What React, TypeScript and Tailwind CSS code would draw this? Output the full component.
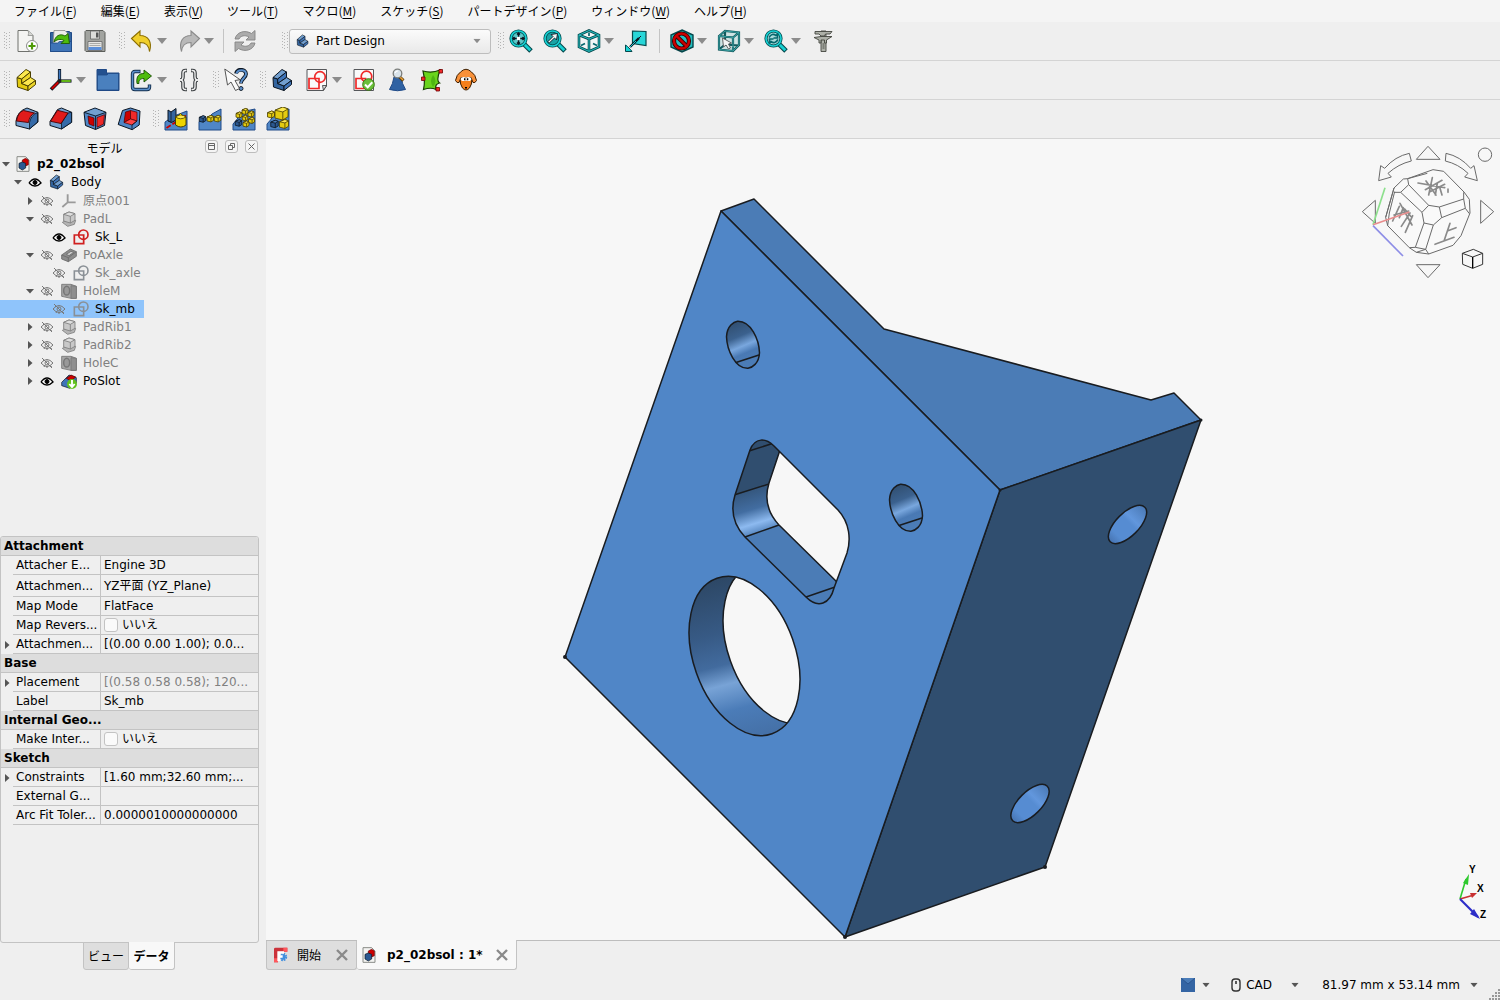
import React from 'react'

type IconProps = { className?: string }

const BLUE = '#3f74b8'
const BLUE_LIGHT = '#729fcf'
const BLUE_DARK = '#204a87'
const INK = '#0b1521'
const RED = '#ef2929'
const RED_DARK = '#cc0000'
const YELLOW = '#edd400'
const CYAN = '#16d0d2'
const CYAN_DARK = '#06686e'

// stair-shaped solid shared by the body and part icons
const Step = ({ top, left, right, line }: { top: string; left: string; right: string; line: string }) => (
  <g stroke={line} strokeLinejoin="round">
    <path d="M2 9.500L6.700 11V15.500L13 18V22.500L2.500 19z" fill={left} />
    <path d="M2 9.500L11 1.500L15.500 4L6.700 11z" fill={top} />
    <path d="M6.700 11L15.500 4V9.500L6.700 15.500z" fill={right} />
    <path d="M6.700 15.500L15.500 9.500L20.500 12.500L13 18z" fill={top} />
    <path d="M13 18L20.500 12.500V16.500L13 22.500z" fill={right} />
  </g>
)

const Cube = ({ x, y, s, blue }: { x: number; y: number; s: number; blue?: boolean }) => (
  <g transform={`translate(${x} ${y}) scale(${s / 10})`} strokeWidth={8 / s} stroke={blue ? INK : '#4a3f00'} strokeLinejoin="round">
    <path d="M-5-2.500L1-5L5-3.500V2.500L1 5L-5 3.500z" fill={blue ? '#2b5891' : '#e3cb10'} />
    <path d="M-5-2.500L1-5L5-3.500L1-1.200z" fill={blue ? '#4a7fc0' : '#fce94f'} />
    <path d="M1-1.200V5" />
  </g>
)

const icons: Record<string, React.ReactNode> = {
  new: (
    <>
      <path d="M3 1.500h10l5 5v16H3z" fill="#f4f4f2" stroke="#6f716d" />
      <path d="M13 1.500q1.500 3 0 5h5" fill="#d8d8d5" stroke="#8c8e8a" strokeWidth=".8" />
      <circle cx="17" cy="17" r="5.500" fill="#fff" stroke="#8a8c88" />
      <path d="M17 13.500v7M13.500 17h7" stroke="#4e9a06" strokeWidth="2.200" />
    </>
  ),
  open: (
    <>
      <path d="M1.500 3.500h5v-1h14v1h2v19h-21z" fill="#34659f" stroke={BLUE_DARK} />
      <path d="M5 1.500h11l3 3v11H4z" fill="#ececea" stroke="#888" strokeWidth=".8" />
      <path d="M1.500 14h7l2-1.500h12v10h-21z" fill={BLUE} stroke={BLUE_DARK} strokeWidth=".8" />
      <path d="M5 13c1-6 6-9 11-6l3-2.500 1.500 10h-8.500l3-3c-4-2-7-1-10 1.500z" fill="#4ebb0c" stroke="#1c5a02" strokeWidth=".9" />
    </>
  ),
  save: (
    <>
      <path d="M3 1.500h17l2 2v19H3l-1-1v-19z" fill="#a2a4a0" stroke="#5c5e5a" />
      <path d="M7.500 2h9v8h-9z" fill="#dcdcda" stroke="#666" strokeWidth=".8" />
      <path d="M13 3.500h2.500v5H13z" fill="#555" />
      <path d="M5 12.500h14v9H5z" fill="#e6e6e4" stroke="#666" strokeWidth=".8" />
      <path d="M6.500 14.500h11M6.500 16.500h11" stroke="#9a9c98" strokeWidth=".8" />
      <path d="M5.500 18h13v3h-13z" fill="#5b8fd9" />
    </>
  ),
  undo: (
    <path d="M1.500 9.500L10 2v4.500c8 0 12.500 6 9.500 16-.5-6-3.500-9-9.500-9V18z" fill="#f0cf2c" stroke="#8a6d00" strokeWidth="1.100" />
  ),
  redo: (
    <path d="M22.500 9.500L14 2v4.500c-8 0-12.500 6-9.500 16 .5-6 3.500-9 9.500-9V18z" fill="#b9b9b9" stroke="#8a8a8a" strokeWidth="1.100" />
  ),
  refresh: (
    <g fill="#ababab" stroke="#858585" strokeWidth=".9">
      <path d="M2 10C3.500 3 12 .5 18.500 4.500L22 1.500V11h-9l3-3C11.500 5.500 7.500 7 6 10z" />
      <path d="M22 14C20.500 21 12 23.500 5.500 19.500L2 22.500V13h9l-3 3c4.500 2.500 8.500 1 10-2z" />
    </g>
  ),
  body: <Step top={BLUE_LIGHT} left="#34659f" right={BLUE} line={INK} />,
  part: <Step top="#fce94f" left="#e3cb10" right="#edd62a" line="#4a3f00" />,
  axes: (
    <>
      <path d="M10.500 13V1" stroke={INK} strokeWidth="3.200" />
      <path d="M10.500 12V2" stroke="#3f78c0" strokeWidth="1.600" />
      <path d="M10.500 13h12" stroke={INK} strokeWidth="3.200" />
      <path d="M12 13h9.700" stroke="#73d216" strokeWidth="1.700" />
      <path d="M10.500 13L2 21.500" stroke={INK} strokeWidth="3.600" />
      <path d="M9.500 14L2.800 20.800" stroke={RED_DARK} strokeWidth="2.200" />
      <circle cx="10.500" cy="13" r="2" fill="#222" />
    </>
  ),
  folder: (
    <>
      <path d="M1 1.500h9.500v3.500H23v17.500H1z" fill="#23518f" stroke={BLUE_DARK} />
      <path d="M1.500 7h9.500l1.500-1.500h10v16.500h-21z" fill="#4a80be" stroke={BLUE_DARK} strokeWidth=".8" />
    </>
  ),
  export: (
    <>
      <path d="M10.500 3.500H5Q2.500 3.500 2.500 6v13Q2.500 21.500 5 21.500h12q2.500 0 2.500-2.500v-2.500" fill="none" stroke="#14304f" strokeWidth="3.400" />
      <path d="M9.700 3.500H5Q2.500 3.500 2.500 6v13Q2.500 21.500 5 21.500h12q2.500 0 2.500-2.500v-1.700" fill="none" stroke="#5b8fcb" strokeWidth="1.500" />
      <path d="M7 15.500C6 8 9 5.500 14 5.500V2l7.500 6-7.500 6V10.500c-4 0-5.500 2-5 5z" fill="#4ebb0c" stroke="#174d02" strokeWidth=".9" />
    </>
  ),
  braces: (
    <g fill="none" stroke="#3c4043" strokeWidth="3.600">
      <path d="M10 2.500H8.500Q6 2.500 6 5v4Q6 12 3 12q3 0 3 3v4q0 2.500 2.500 2.500H10" />
      <path d="M14 2.500h1.500Q18 2.500 18 5v4q0 3 3 3-3 0-3 3v4q0 2.500-2.500 2.500H14" />
      <g stroke="#f3f3f3" strokeWidth="1.300">
        <path d="M9.500 2.500h-1Q6 2.500 6 5v4Q6 12 3 12q3 0 3 3v4q0 2.500 2.500 2.500h1" />
        <path d="M14.500 2.500h1Q18 2.500 18 5v4q0 3 3 3-3 0-3 3v4q0 2.500-2.500 2.500h-1" />
      </g>
    </g>
  ),
  whatsthis: (
    <>
      <path d="M12 5.500C13 0 22 1 22 6c0 4-5 4.500-5 9.500" fill="none" stroke={INK} strokeWidth="3.800" />
      <path d="M12.500 5.500C13.500 1 22 1 22 6c0 4-5 4.500-5 9" fill="none" stroke="#5b8fcb" strokeWidth="2" />
      <circle cx="17" cy="20.500" r="2" fill="#5b8fcb" stroke={INK} strokeWidth=".9" />
      <path d="M.8 1l2.700 16 3.500-3 4.500 8.500 4-2-4.500-8 5-.8z" fill="#fafafa" stroke="#555" />
    </>
  ),
  sketch: (
    <>
      <path d="M2 1.500h19.500v16.500l-3.500 4.500H2z" fill="#fafafa" stroke="#55575a" />
      <path d="M21.500 17.500l-3 5-1-5z" fill="#ddd" stroke="#333" strokeWidth=".8" />
      <circle cx="15" cy="9" r="5.300" fill="none" stroke={RED} strokeWidth="1.700" />
      <path d="M4 10.500h10v10H4z" fill="none" stroke={RED} strokeWidth="1.700" />
    </>
  ),
  validate: (
    <>
      <path d="M2 1.500h19.500v21H2z" fill="#fafafa" stroke="#55575a" />
      <circle cx="14.500" cy="8.500" r="5.300" fill="none" stroke={RED} strokeWidth="1.700" />
      <path d="M4 10.500h9.500v10H4z" fill="none" stroke={RED} strokeWidth="1.700" />
      <circle cx="16.500" cy="16.500" r="5.800" fill="#6abf3a" stroke="#3b7a12" />
      <path d="M13 16.500l2.700 2.700 4.600-5" fill="none" stroke="#fff" strokeWidth="2" />
    </>
  ),
  check: (
    <>
      <path d="M8 9h7q1 7 4.500 12.500-8 2.500-16 0Q7 16 8 9z" fill="#2f62a3" stroke={BLUE_DARK} />
      <path d="M13.500 9l4 3.500" stroke="#5f3d06" strokeWidth="3" />
      <path d="M14 9l3 3" stroke="#e9a13b" strokeWidth="1.600" />
      <circle cx="11.500" cy="5.500" r="4.300" fill="#d9e3ea" stroke="#7a7d7a" strokeWidth="1.300" />
      <path d="M9 5q1-2.200 3-2" stroke="#fff" fill="none" strokeWidth="1.200" />
    </>
  ),
  binder: (
    <>
      <path d="M3 3q9 2.500 17-1-4 11-.5 13-5 1-3.500 6.500-5-2.500-12.500 0 2-8-.5-18.500z" fill="#6ad41c" stroke="#173f02" strokeWidth="1.200" />
      <path d="M13 7q5 6 0 12-4-6 0-12z" fill="#4fb512" />
      <g fill={RED} stroke="#6d0000" strokeWidth=".8">
        <path d="M19 1.500h3.500V5H19zM1.500 9H5v3.500H1.500zM16 19.500h3.500V23H16z" />
      </g>
    </>
  ),
  clone: (
    <>
      <path d="M6 10q0 7 2.500 10 3.500 4 7 0Q18 17 18 10z" fill="#f57f1b" stroke="#3d1e00" />
      <path d="M6.500 4Q12-1.500 17.500 4q4 2.500 5 8.500-1.500 3-3.500 2l-2-5H7l-2 5q-2 1-3.500-2 1-6 5-8.500z" fill="#f9913a" stroke="#3d1e00" />
      <ellipse cx="9.700" cy="11" rx="3" ry="2" fill="#fff" />
      <ellipse cx="14.300" cy="11" rx="3" ry="2" fill="#fff" />
      <path d="M10 10.300h1.500v2H10zM12.800 10.300h1.500v2h-1.500zM11 19h2v1.500h-2z" fill="#000" />
    </>
  ),
  fillet: (
    <>
      <path d="M1 14Q2.500 4 12 1l11 4.300V15l-8.500 7L1 18.500z" fill={BLUE_LIGHT} stroke={INK} strokeLinejoin="round" />
      <path d="M14.500 22V15.500Q16 8 22.500 5.500V15z" fill="#356aa8" stroke={INK} strokeWidth=".8" />
      <path d="M1.500 14Q3 5 8.500 3.500L19.500 6Q14.500 8.500 13.500 15.500z" fill="#e01b1b" stroke="#4d0000" strokeWidth=".9" />
    </>
  ),
  chamfer: (
    <>
      <path d="M1 14.500L8.500 2.500L12.500 1l10.200 4.300v10L12.500 22L1 18.500z" fill={BLUE_LIGHT} stroke={INK} strokeLinejoin="round" />
      <path d="M12.500 22v-6L19 6l3.500-.7v10z" fill="#356aa8" stroke={INK} strokeWidth=".8" />
      <path d="M1.500 14.300L8.500 3.300L19 6l-7 10.500z" fill="#e01b1b" stroke="#4d0000" strokeWidth=".9" />
    </>
  ),
  draft: (
    <>
      <path d="M1 5.300L12 1l11 4.300L21.500 18.500l-9 4-10-4z" fill="#4f86c6" stroke={INK} strokeLinejoin="round" />
      <path d="M2 5.500L12 1.800L22 5.500l-9.500 3z" fill={BLUE_LIGHT} />
      <path d="M1 5.300l11.500 3.700L23 5.300M12.500 9v13.500" stroke={INK} strokeWidth=".9" />
      <path d="M5 9l6 2v8l-5-2z" fill={RED_DARK} stroke="#4d0000" strokeWidth=".7" />
      <path d="M14 10.500l7.500-2.800-1 9.500-6.500 3z" fill={RED} stroke="#4d0000" strokeWidth=".7" />
    </>
  ),
  thickness: (
    <>
      <path d="M5.500 3.500l8-2.500L23 4l-.8 14-7 4.700L1.200 17.500z" fill="#4f86c6" stroke={INK} strokeLinejoin="round" />
      <path d="M8.500 5l5-1.500V12l-6.500 3.500z" fill={RED_DARK} stroke="#4d0000" strokeWidth=".7" />
      <path d="M13.500 3.500L20 5.200V14l-6.500-2z" fill={RED} stroke="#4d0000" strokeWidth=".7" />
      <path d="M7 15.500l6.500-3.500 6.500 2-5 4z" fill="#f44" stroke="#4d0000" strokeWidth=".7" />
      <path d="M15 18v4.500M15 18l5-4" stroke={INK} strokeWidth=".8" />
    </>
  ),
  mirrored: (
    <>
      <path d="M1 15L10 9L23 4V23H1z" fill="#4f86c6" stroke={BLUE_DARK} />
      <path d="M2.500 21L22 8.500" stroke={RED_DARK} strokeWidth="1.800" strokeDasharray="5 2" />
      <path d="M4 3l3 2 5-3.500V13L7.500 15.500 4 14z" fill="#34659f" stroke={INK} />
      <path d="M7 5v10.500" stroke={INK} strokeWidth=".8" />
      <path d="M11.500 10q5-4 10.500 0v8q-5 4-10.500 0z" fill={YELLOW} stroke="#4a3f00" />
      <path d="M11.500 10q5 3.500 10.500 0-5-4-10.500 0" fill="#fce94f" stroke="#4a3f00" strokeWidth=".8" />
      <path d="M14.500 8.500l2-2 2 2" fill={YELLOW} stroke="#4a3f00" strokeWidth=".8" />
    </>
  ),
  linear: (
    <>
      <path d="M1 14.500Q9 13 14 7L23 2V23H1z" fill="#4f86c6" stroke={BLUE_DARK} />
      <Cube x={4.5} y={12} s={6.500} blue />
      <Cube x={12.300} y={11.700} s={6.500} />
      <Cube x={19.500} y={11.700} s={6.500} />
    </>
  ),
  polar: (
    <>
      <path d="M1 17Q4 14 8 8L16 3.500L23 2V23H1z" fill="#4f86c6" stroke={BLUE_DARK} />
      <Cube x={13} y={4.500} s={6} />
      <Cube x={7} y={8} s={6} />
      <Cube x={19} y={7} s={6} />
      <Cube x={13} y={11} s={5.500} />
      <Cube x={19.500} y={13.500} s={6} />
      <Cube x={14} y={17} s={6} />
      <Cube x={6.500} y={16} s={6.500} blue />
    </>
  ),
  multi: (
    <>
      <path d="M1 17Q4 14 8 8L16 3.500L23 2V23H1z" fill="#4f86c6" stroke={BLUE_DARK} />
      <Cube x={5} y={7.500} s={7} />
      <Cube x={15.500} y={6.500} s={13} />
      <Cube x={18} y={17} s={9} />
      <Cube x={8.500} y={17} s={7.500} blue />
    </>
  ),
  zoomFit: (
    <>
      <path d="M14.500 14.500l7.500 7.500" stroke="#04484c" strokeWidth="5" />
      <path d="M15 15l6.300 6.300" stroke={CYAN} strokeWidth="2.800" />
      <circle cx="9.500" cy="9.500" r="7.500" fill="#5cc9ca" stroke="#04484c" strokeWidth="3.200" />
      <circle cx="9.500" cy="9.500" r="7.500" fill="none" stroke={CYAN} strokeWidth="1.700" />
      <path d="M9.500 4v11M4 9.500h11M8 5.500l1.500-1.500L11 5.500M8 13.500l1.500 1.500 1.500-1.500M5.500 8L4 9.500 5.500 11M13.500 8L15 9.500 13.500 11" stroke={INK} fill="none" strokeWidth="1.500" />
      <path d="M7.800 7.800h3.400v3.400H7.800z" fill="#fff" />
    </>
  ),
  zoomSel: (
    <>
      <path d="M14.500 14.500l7.500 7.500" stroke="#04484c" strokeWidth="5" />
      <path d="M15 15l6.300 6.300" stroke={CYAN} strokeWidth="2.800" />
      <circle cx="9.500" cy="9.500" r="7.500" fill="#1aa3a5" stroke="#04484c" strokeWidth="3.200" />
      <circle cx="9.500" cy="9.500" r="7.500" fill="none" stroke={CYAN} strokeWidth="1.700" />
      <path d="M14.500 4.500l-1 6.500-2-2L6.300 14l-1.300-1.500 5-5L8 5.500z" fill="#f4f4f4" stroke={INK} strokeWidth=".9" />
    </>
  ),
  zoomSync: (
    <>
      <path d="M14.500 14.500l7.500 7.500" stroke="#04484c" strokeWidth="5" />
      <path d="M15 15l6.300 6.300" stroke={CYAN} strokeWidth="2.800" />
      <circle cx="9.500" cy="9.500" r="7.500" fill="#a9dcdc" stroke="#04484c" strokeWidth="3.200" />
      <circle cx="9.500" cy="9.500" r="7.500" fill="none" stroke={CYAN} strokeWidth="1.700" />
      <path d="M5 8.500q3-5 7-2l1.500-1.500v4H9.500M14 10.500q-3 5-7 2l-1.500 1.500v-4h4" fill="none" stroke={CYAN_DARK} strokeWidth="1.700" />
    </>
  ),
  iso: (
    <>
      <path d="M12 1.500l10 4.500v12l-10 4.500L2 18V6z" fill="#f2f6f6" />
      <path d="M12 1.500l10 4.500v12l-10 4.500L2 18V6zM2 6l10 4 10-4M12 10v12" fill="none" stroke="#04484c" strokeWidth="2.600" />
      <path d="M12 1.500l10 4.500v12l-10 4.500L2 18V6zM2 6l10 4 10-4M12 10v12" fill="none" stroke="#24b9bb" strokeWidth="1.100" />
      <path d="M4 16.500l4-2M20 16.500l-4-2M12 3.500V7" stroke={CYAN_DARK} strokeWidth="1.700" />
    </>
  ),
  align: (
    <>
      <path d="M8.500 2l13.500.5v14l-13.500-2z" fill="#27d6d8" stroke="#04484c" strokeWidth="1.200" />
      <path d="M15 9l-9 9" stroke={INK} strokeWidth="2.400" />
      <path d="M12 12l-6 6" stroke={CYAN} strokeWidth="1" />
      <path d="M1.500 22.500V16l2 1.500 3 3L8 22.500z" fill={CYAN} stroke="#04484c" />
      <path d="M14 10l3-3" stroke={INK} />
    </>
  ),
  drawStyle: (
    <>
      <path d="M12 1l11 5v12l-11 5L1 18V6z" fill="#22bfc1" stroke="#04484c" strokeWidth="1.400" />
      <circle cx="11.500" cy="12" r="7.500" fill="none" stroke="#3a0000" strokeWidth="4.200" />
      <path d="M6.500 7l10 10" stroke="#3a0000" strokeWidth="4.200" />
      <circle cx="11.500" cy="12" r="7.500" fill="none" stroke={RED_DARK} strokeWidth="2.400" />
      <path d="M6.500 7l10 10" stroke={RED_DARK} strokeWidth="2.400" />
    </>
  ),
  boxSel: (
    <>
      <path d="M2 7l6-5 14 1.500V16l-6 6L2 20.500z" fill="#cfe3e3" />
      <path d="M2 7l6-5 14 1.500V16l-6 6L2 20.500zM2 7l14 1.500v13M16 8.500l6-5M8 2v13.500l14 1M8 15.500l-6 5" fill="none" stroke="#135a5e" strokeWidth="2.200" />
      <path d="M2 7l6-5 14 1.500V16l-6 6L2 20.500zM2 7l14 1.500v13M16 8.500l6-5" fill="none" stroke="#3fa9ab" strokeWidth=".9" />
      <path d="M5.500 9l1 9 2.500-2 2.500 4 2-1-2-4 3-1z" fill="#f4f4f4" stroke="#555" strokeWidth=".9" />
    </>
  ),
  caliper: (
    <g fill="#aeb1a9" stroke="#44463f" strokeWidth=".9">
      <path d="M10 2h5v20.500h-5z" />
      <path d="M4 2.500h17l-2 2.500h-4.500l-1 2H10L8 5H4z" />
      <path d="M3 8.500l7-1h11l-5.500 3.500V14h-2v-3H10v3H8v-3z" />
      <path d="M11.500 15h2M11.500 17h2M11.500 19h2" />
    </g>
  ),
  doc: (
    <>
      <path d="M3 1h13l5 5v17H3z" fill="#f4f4f2" stroke="#8a8c88" strokeWidth="1.500" />
      <path d="M11 6l5-2.500L20 6v7l-4 2-5-2z" fill={RED_DARK} stroke="#6d0000" />
      <path d="M6 11l5-2 5 2v7l-5 3-5-3z" fill="#2b5891" stroke={INK} />
    </>
  ),
  origin: <path d="M10 14V2M10 14h12M10 14l-8 7" stroke="#9a9a9a" strokeWidth="2.800" fill="none" />,
  pad: (
    <g stroke="#808080" strokeWidth="1.300">
      <path d="M2 17l6-3h14l-2 6-10 3z" fill="#b5b5b5" />
      <path d="M4 5l8-3.500L21 4v10l-7 4-10-3z" fill="#c8c8c8" />
      <path d="M4 5l8-3.500L21 4l-7 4z" fill="#dedede" />
      <path d="M14 8v10" fill="none" />
    </g>
  ),
  pocket: (
    <g stroke="#6c6c6c" strokeWidth="1.300">
      <path d="M1 12L14 3l9 4v7L11 22l-10-4z" fill="#8c8c8c" />
      <path d="M1 12l10 4 12-9M11 16v6" fill="none" />
      <path d="M8 11l7-4.500 4 1.500-7 5z" fill="#d0d0d0" />
    </g>
  ),
  hole: (
    <g stroke="#777" strokeWidth="1.300">
      <path d="M1 2h14l8 3v18h-8L1 20z" fill="#a6a6a6" />
      <path d="M15 4l8 1v18h-8z" fill="#8f8f8f" />
      <ellipse cx="8.500" cy="11.500" rx="4.500" ry="6.500" fill="#999" strokeWidth="2.200" />
    </g>
  ),
  slot: (
    <>
      <path d="M1 14L12 3l11 4v8l-10 8-12-4z" fill={BLUE} stroke={INK} />
      <path d="M8 8l7-5 7 3-7 6z" fill={RED_DARK} stroke="#4d0000" />
      <circle cx="16.500" cy="16.500" r="7.500" fill="#62c11d" />
      <path d="M16.500 10.500v9M12.500 16.500l4 4.500 4-4.500" stroke="#fff" strokeWidth="2.800" fill="none" />
    </>
  ),
  treeSketch: (
    <g fill="none" stroke="#d02020" strokeWidth="2.600">
      <circle cx="15.500" cy="8.500" r="7" />
      <path d="M2 9h14v13H2z" />
    </g>
  ),
  treeSketchOff: (
    <g fill="none" stroke="currentColor" strokeWidth="2.400">
      <circle cx="15.500" cy="8.500" r="7" />
      <path d="M2 9h14v13H2z" />
    </g>
  ),
  freecad: (
    <>
      <path d="M3 3q0-2 2-2h18v6H9v16H3z" fill="#cb333b" />
      <path d="M17 1h6v6h-6zM3 17h6v6H3z" fill="#ff585d" />
      <circle cx="16.500" cy="15" r="4" fill="#418fde" />
      <circle cx="16.500" cy="15" r="4.800" fill="none" stroke="#418fde" strokeWidth="3" strokeDasharray="2.500 1.270" />
      <path d="M8 6.500h10V10h-5.500v2.500H16V16h-3.500v5H8z" fill="#fff" />
    </>
  ),
}

const Icon = ({ name, className = 'size-6' }: IconProps & { name: string }) => (
  <svg viewBox="0 0 24 24" className={`shrink-0 ${className}`} fill="none" aria-hidden="true">
    {icons[name]}
  </svg>
)

const Eye = ({ off }: { off?: boolean }) =>
  off ? (
    <svg viewBox="0 0 14 12" className="h-3 w-3.5 shrink-0" fill="none" stroke="#777" aria-hidden="true">
      <path d="M1 6q6-7 12 0-6 7-12 0M2 1l10 10M4 10l1-2M7 11V9M10 9l2 1M3 3l1 1" />
      <circle cx="7" cy="6" r="2" />
    </svg>
  ) : (
    <svg viewBox="0 0 14 12" className="h-3 w-3.5 shrink-0" fill="#fff" stroke="#000" aria-hidden="true">
      <path d="M1 7q6-8 12 0-6 6-12 0" strokeWidth="1.300" />
      <circle cx="7" cy="6.500" r="2" fill="#000" />
    </svg>
  )

const Down = ({ className = 'text-[#8c8c8c]' }: IconProps) => (
  <svg viewBox="0 0 10 6" className={`h-1.5 w-2.5 shrink-0 ${className}`} fill="currentColor" aria-hidden="true">
    <path d="M0 0h10L5 6z" />
  </svg>
)

const TreeArrow = ({ open }: { open?: boolean }) => (
  <svg viewBox="0 0 12 12" className="size-3 shrink-0" fill="#555" aria-hidden="true">
    {open ? <path d="M2 4h8L6 8.500z" /> : <path d="M4 2v8l4.500-4z" />}
  </svg>
)

const Grip = () => (
  <svg viewBox="0 0 6 18" className="ml-[7px] h-[18px] w-1.5 shrink-0" fill="#b4b4b4" aria-hidden="true">
    {[0, 3, 6, 9, 12, 15].map((y) => (
      <path key={y} d={`M0 ${y}h1v1H0zM5 ${y}h1v1H5zM2 ${y + 1}h1v1H2z`} />
    ))}
  </svg>
)

const Tool = ({ icon, label, menu }: { icon: string; label: string; menu?: boolean }) => (
  <button type="button" aria-label={label} className={`flex h-8 shrink-0 items-center gap-[3px] pl-[5px] ${menu ? 'w-[47px]' : 'w-[34px]'}`}>
    <Icon name={icon} />
    {menu && <Down />}
  </button>
)

const Separator = ({ className }: IconProps) => <div className={`h-6 w-px shrink-0 bg-[#c4c4c4] ${className}`} />

const menus = [
  ['ファイル', 'F'],
  ['編集', 'E'],
  ['表示', 'V'],
  ['ツール', 'T'],
  ['マクロ', 'M'],
  ['スケッチ', 'S'],
  ['パートデザイン', 'P'],
  ['ウィンドウ', 'W'],
  ['ヘルプ', 'H'],
]

const MenuBar = () => (
  <nav className="flex h-[22px] shrink-0 items-center bg-[#f4f4f4] pl-0.5 font-['Noto_Sans_CJK_JP',sans-serif]">
    {menus.map(([label, key]) => (
      <button key={key} type="button" className="px-3 whitespace-nowrap">
        {label}(<span className="underline underline-offset-2">{key}</span>)
      </button>
    ))}
  </nav>
)

const toolbarRow = 'flex h-[39px] shrink-0 items-center border-b border-[#d4d4d4]'

const Toolbars = () => (
  <>
    <div className={toolbarRow}>
      <div className="-ml-[3px] flex items-center">
        <Grip />
        <Tool icon="new" label="新規" />
        <Tool icon="open" label="開く" />
        <Tool icon="save" label="保存" />
      </div>
      <div className="flex items-center">
        <Grip />
        <Tool icon="undo" label="元に戻す" menu />
        <Tool icon="redo" label="やり直し" menu />
        <Separator className="mx-1" />
        <Tool icon="refresh" label="更新" />
      </div>
      <div className="ml-[13px] flex items-center gap-px">
        <Grip />
        <label className="flex h-[25px] w-[202px] items-center gap-1.5 rounded-[3px] border border-[#bdbdbd] bg-linear-to-b from-[#fbfbfb] to-[#e9e9e9] pr-2 pl-1.5">
          <Icon name="body" className="size-3.5" />
          <select aria-label="ワークベンチ" className="h-full min-w-0 flex-1 appearance-none bg-transparent pb-px outline-none">
            <option>Part Design</option>
          </select>
          <Down className="scale-75 text-[#8c8c8c]" />
        </label>
      </div>
      <div className="flex items-center">
        <Grip />
        <Tool icon="zoomFit" label="全てにフィット" />
        <Tool icon="zoomSel" label="選択にフィット" />
        <Tool icon="iso" label="アイソメトリック" menu />
        <Tool icon="align" label="選択に揃える" />
        <Separator className="mr-[5px] ml-1.5" />
        <Tool icon="drawStyle" label="描画スタイル" menu />
        <Tool icon="boxSel" label="選択フィルター" menu />
        <Tool icon="zoomSync" label="同期ビュー" menu />
        <Tool icon="caliper" label="計測" />
      </div>
    </div>
    <div className={toolbarRow}>
      <div className="-ml-[3px] flex items-center">
        <Grip />
        <Tool icon="part" label="パーツを作成" />
        <Tool icon="axes" label="座標系" menu />
        <Tool icon="folder" label="グループ" />
        <Tool icon="export" label="リンクを作成" menu />
        <Tool icon="braces" label="変数セット" />
      </div>
      <div className="flex items-center">
        <Grip />
        <Tool icon="whatsthis" label="これは何?" />
      </div>
      <div className="flex items-center">
        <Grip />
        <Tool icon="body" label="ボディーを作成" />
        <Tool icon="sketch" label="スケッチを作成" menu />
        <Tool icon="validate" label="スケッチを検証" />
        <Tool icon="check" label="ジオメトリーをチェック" />
        <Tool icon="binder" label="シェイプバインダー" />
        <Tool icon="clone" label="クローン" />
      </div>
    </div>
    <div className={toolbarRow}>
      <div className="-ml-[3px] flex items-center">
        <Grip />
        <Tool icon="fillet" label="フィレット" />
        <Tool icon="chamfer" label="面取り" />
        <Tool icon="draft" label="抜き勾配" />
        <Tool icon="thickness" label="厚み" />
      </div>
      <div className="flex items-center">
        <Grip />
        <Tool icon="mirrored" label="鏡像" />
        <Tool icon="linear" label="直線状パターン" />
        <Tool icon="polar" label="円状パターン" />
        <Tool icon="multi" label="マルチ変換" />
      </div>
    </div>
  </>
)

interface TreeNode {
  label: string
  icon: string
  depth: number
  open?: boolean
  leaf?: boolean
  visible?: boolean
  selected?: boolean
}

const nodes: TreeNode[] = [
  { label: 'Body', icon: 'body', depth: 1, open: true, visible: true },
  { label: '原点001', icon: 'origin', depth: 2 },
  { label: 'PadL', icon: 'pad', depth: 2, open: true },
  { label: 'Sk_L', icon: 'treeSketch', depth: 3, leaf: true, visible: true },
  { label: 'PoAxle', icon: 'pocket', depth: 2, open: true },
  { label: 'Sk_axle', icon: 'treeSketchOff', depth: 3, leaf: true },
  { label: 'HoleM', icon: 'hole', depth: 2, open: true },
  { label: 'Sk_mb', icon: 'treeSketchOff', depth: 3, leaf: true, selected: true },
  { label: 'PadRib1', icon: 'pad', depth: 2 },
  { label: 'PadRib2', icon: 'pad', depth: 2 },
  { label: 'HoleC', icon: 'hole', depth: 2 },
  { label: 'PoSlot', icon: 'slot', depth: 2, visible: true },
]

const indents = ['', 'pl-3', 'pl-6', 'pl-6']

const ModelTree = () => (
  <ul className="min-h-0 flex-1 overflow-hidden">
    <li className="flex h-[19px] items-center">
      <TreeArrow open />
      <Icon name="doc" className="mr-1.5 ml-[3px] size-4" />
      <span className="font-bold">p2_02bsol</span>
    </li>
    {nodes.map((node) => (
      <li
        key={node.label}
        className={`flex w-36 items-center ${indents[node.depth]} ${node.icon === 'origin' ? 'h-[19px]' : 'h-[18px]'} ${node.selected ? 'bg-[#8fc4fb]' : ''}`}
      >
        {node.leaf ? <span className="w-6" /> : <TreeArrow open={node.open} />}
        <span className="ml-1 flex">
          <Eye off={!node.visible} />
        </span>
        <Icon name={node.icon} className="mr-1.5 ml-[7px] size-4 text-[#8a9096]" />
        <span className={`whitespace-nowrap ${node.visible || node.selected ? 'text-black' : 'text-[#808080]'}`}>{node.label}</span>
      </li>
    ))}
  </ul>
)

interface Property {
  name: string
  value?: string
  group?: boolean
  expand?: boolean
  check?: boolean
  muted?: boolean
  tall?: boolean
}

const properties: Property[] = [
  { name: 'Attachment', group: true },
  { name: 'Attacher E...', value: 'Engine 3D' },
  { name: 'Attachmen...', value: 'YZ平面 (YZ_Plane)', tall: true },
  { name: 'Map Mode', value: 'FlatFace' },
  { name: 'Map Revers...', value: 'いいえ', check: true },
  { name: 'Attachmen...', value: '[(0.00 0.00 1.00); 0.0...', expand: true },
  { name: 'Base', group: true },
  { name: 'Placement', value: '[(0.58 0.58 0.58); 120...', expand: true, muted: true },
  { name: 'Label', value: 'Sk_mb' },
  { name: 'Internal Geo...', group: true },
  { name: 'Make Inter...', value: 'いいえ', check: true },
  { name: 'Sketch', group: true },
  { name: 'Constraints', value: '[1.60 mm;32.60 mm;...', expand: true },
  { name: 'External G...', value: '' },
  { name: 'Arc Fit Toler...', value: '0.0000010000000000' },
]

const PropertyTable = () => (
  <div className="mr-px h-[407px] shrink-0 overflow-hidden rounded-[3px] border border-[#c3c3c3]">
    <table className="w-full table-fixed border-separate border-spacing-0">
      <colgroup>
        <col className="w-3" />
        <col className="w-[88px]" />
        <col />
      </colgroup>
      <tbody>
        {properties.map((p, i) =>
          p.group ? (
            <tr key={i} className="h-[19px]">
              <th colSpan={3} className="h-[19px] border-b border-[#c3c3c3] bg-[#dddddd] p-0 pl-[3px] text-left leading-4 font-bold">
                {p.name}
              </th>
            </tr>
          ) : (
            <tr key={i} className="whitespace-nowrap">
              <td className="p-0">{p.expand && <TreeArrow />}</td>
              <td className={`border-r border-b border-[#c3c3c3] p-0 pl-[3px] leading-4 ${p.tall ? 'h-[22px]' : 'h-[19px]'}`}>{p.name}</td>
              <td className={`overflow-hidden border-b border-[#c3c3c3] p-0 pl-[3px] leading-4 ${p.muted ? 'text-[#808080]' : ''}`}>
                {p.check ? (
                  <label className="flex items-center gap-1">
                    <input type="checkbox" className="size-3.5 appearance-none rounded-[3px] border border-[#c3c3c3] bg-[#fafafa]" />
                    {p.value}
                  </label>
                ) : (
                  p.value
                )}
              </td>
            </tr>
          ),
        )}
      </tbody>
    </table>
  </div>
)

const dockButtons = [
  { label: 'オーバーレイ', path: 'M3 3h6v6H3zM3 5h6' },
  { label: 'フロート', path: 'M5 5V3h4v4H7M3 5h4v4H3z' },
  { label: '閉じる', path: 'M3 3l6 6M9 3L3 9' },
]

const Dock = () => (
  <aside className="flex w-[260px] shrink-0 flex-col">
    <header className="flex h-[15px] shrink-0 items-center">
      <h2 className="w-[205px] pt-0.5 pl-1 text-center font-['Noto_Sans_CJK_JP',sans-serif] leading-4">モデル</h2>
      <div className="flex gap-[7px]">
        {dockButtons.map((b) => (
          <button key={b.label} type="button" aria-label={b.label} className="size-[13px] rounded-[3px] border border-[#bdbdbd] bg-[#f5f5f5]">
            <svg viewBox="0.500 0.500 11 11" className="size-[11px]" fill="none" stroke="#666" aria-hidden="true">
              <path d={b.path} />
            </svg>
          </button>
        ))}
      </div>
    </header>
    <ModelTree />
    <PropertyTable />
    <div className="-mt-px mr-0.5 flex h-7 shrink-0 justify-center font-['Noto_Sans_CJK_JP',sans-serif]">
      <button type="button" className="w-[46px] rounded-b-[3px] border border-[#c3c3c3] bg-[#dedede]">
        ビュー
      </button>
      <button type="button" className="w-[46px] rounded-b-[3px] border border-t-0 border-l-0 border-[#c3c3c3] bg-[#f8f8f8] font-bold">
        データ
      </button>
    </div>
  </aside>
)

const SLOT = 'M750 450C755 437 766 438 774 446L838 510C850 523 851 540 847 553L834 588C830 604 818 609 806 597L745 537C732 523 731 508 735 495Z'

const Model = () => (
  <svg viewBox="266 139 1234 801" className="h-full w-full" role="img" aria-label="PoSlot">
    <defs>
      <linearGradient id="bore" x1="0" y1="0" x2=".3" y2="1">
        <stop offset="0" stopColor="#2e4a69" />
        <stop offset=".4" stopColor="#3b618e" />
        <stop offset=".62" stopColor="#79a7de" />
        <stop offset=".78" stopColor="#4979b4" />
        <stop offset="1" stopColor="#4b7cb6" />
      </linearGradient>
      <linearGradient id="ring" gradientUnits="userSpaceOnUse" x1="710" y1="576" x2="752" y2="736">
        <stop offset="0" stopColor="#2c4663" />
        <stop offset=".35" stopColor="#375a85" />
        <stop offset=".54" stopColor="#426b9e" />
        <stop offset=".66" stopColor="#78a3d6" />
        <stop offset=".82" stopColor="#4b7cb8" />
        <stop offset="1" stopColor="#4571a8" />
      </linearGradient>
      <linearGradient id="corner" gradientUnits="userSpaceOnUse" x1="748" y1="488" x2="762" y2="534">
        <stop offset="0" stopColor="#335479" />
        <stop offset=".45" stopColor="#426da1" />
        <stop offset=".75" stopColor="#8dbaf0" />
        <stop offset="1" stopColor="#4b7cb6" />
      </linearGradient>
      <linearGradient id="sideBore" x1="0" y1="0" x2="1" y2="0">
        <stop offset="0" stopColor="#4673b0" />
        <stop offset=".2" stopColor="#568cd2" />
        <stop offset=".55" stopColor="#568cd2" />
        <stop offset=".65" stopColor="#6297dd" />
        <stop offset="1" stopColor="#4a79b5" />
      </linearGradient>
      <clipPath id="slotClip">
        <path d={SLOT} />
      </clipPath>
      <clipPath id="ringClip">
        <ellipse rx="82.500" ry="51" transform="translate(744.500 656) rotate(70.500)" />
      </clipPath>
    </defs>
    <g stroke="#191c20" strokeWidth="1.500" strokeLinejoin="round">
      <path d="M721 211L754 199L884 329L1151 400L1174 393L1201 420L1000 490Z" fill="#4b7cb6" />
      <path d="M1000 490L1201 420L1045 867L845 937Z" fill="#304e6f" />
      <path d="M721 211L1000 490L845 937L565 657Z" fill="#5086c7" />

      {/* mounting holes through the plate */}
      {[0, 163].map((d) => (
        <g key={d} transform={`translate(${d} ${d})`}>
          <g transform="translate(743 344.700)">
            <path d="M-5.500-23.500C8-24 16 -5 16.500 8C16 19 9 23 5 23.500C-8 24-16 5-16.500-8C-16-19-9-23-5.500-23.500Z" fill="url(#bore)" />
          </g>
          <path d="M736 362.500L759 355" />
        </g>
      ))}

      {/* rounded slot */}
      <g clipPath="url(#slotClip)">
        <path d="M730 430H800V478L735 495Z" fill="#304e6f" stroke="none" />
        <path d="M725 498L775 482L785 523L745 537L725 540Z" fill="url(#corner)" stroke="none" />
        <path d="M745 537L779 525L850 580V610H806Z" fill="#4b7cb6" stroke="none" />
        <path d="M749 451L774 443M734 495L769 484M745 537L779 525M806 597L838 586" />
        <path d={SLOT} transform="translate(34 -12)" fill="#f7f7f7" />
      </g>
      <path d={SLOT} fill="none" />

      {/* axle bore */}
      <g clipPath="url(#ringClip)">
        <path d="M680 570h130v170h-130z" fill="url(#ring)" stroke="none" />
        <ellipse rx="82.500" ry="51" transform="translate(778.500 644) rotate(70.500)" fill="#f7f7f7" />
      </g>
      <ellipse rx="82.500" ry="51" transform="translate(744.500 656) rotate(70.500)" fill="none" />

      {/* side holes */}
      <ellipse rx="24.500" ry="11.500" transform="translate(1127.500 524.500) rotate(-45)" fill="url(#sideBore)" />
      <ellipse rx="24.500" ry="11.500" transform="translate(1030 803.500) rotate(-45)" fill="url(#sideBore)" />
    </g>
    <g fill="#191c20">
      <circle cx="565" cy="657" r="2" />
      <circle cx="845" cy="937" r="2" />
      <circle cx="1045" cy="867" r="2" />
      <circle cx="1201" cy="420" r="1.500" />
      <circle cx="1000" cy="490" r="1.500" />
    </g>
  </svg>
)

const NavigationCube = () => (
  <svg viewBox="0 0 450 435" className="absolute top-0 right-0 h-[145px] w-[150px]" fill="none" stroke="#6a6a6a" strokeWidth="3" aria-hidden="true">
    <path d="M234 22L270 61H199zM234 416L270 377H199zM37 218L76 184V253zM431 218L392 184V253z" fill="#f7f7f7" />
    <circle cx="405" cy="47" r="20" />
    <path d="M178 43Q135 52 104 88L92 80L86 125L124 114L114 103Q145 75 184 66z" />
    <path d="M288 43Q331 52 362 88L372 80L382 125L344 114L354 103Q325 75 286 66z" />
    <path d="M173 119L249 92L281 97L342 159L358 181L360 222L333 290L309 319L236 345L199 340L178 326L113 260L107 235L132 147L160 120z" fill="#f9f9f9" />
    <path d="M132 160L152 160L176 137L173 119L232 103M176 137L236 199L216 220L152 160M132 147L107 235M236 199L268 204L275 236L250 258L222 252L216 220M268 204L341 180L346 208L275 236M341 160V180M346 208L358 224M222 252L196 325L178 326M250 258L227 331L236 345M196 325L227 331M199 340L227 331M113 260L118 222L134 158" />
    <g strokeWidth="5" strokeLinecap="round">
      <path d="M204 132L284 146M247 116L236 168M226 152L276 124M228 126L258 168M240 158L284 136M262 132L256 168M276 168L270 148M294 160V150" stroke="#8a8a8a" />
      <path d="M150 193L186 258M128 246L148 202M132 228L176 216M148 236L160 206M154 262L180 222M164 210L182 232M188 230L166 280" stroke="#8a8a8a" />
      <path d="M300 253L282 306M292 276L318 266M255 316L312 295" stroke="#8a8a8a" />
    </g>
    <g strokeWidth="5">
      <path d="M69 257L105 146" stroke="#8de08d" />
      <path d="M69 257L178 219" stroke="#e88d8d" />
      <path d="M69 260L159 351" stroke="#8d8de6" />
    </g>
    <path d="M337 343L370 331L398 343V376L368 388L338 376zM337 343L368 354L398 343" stroke="#333" />
    <path d="M368 354V388" stroke="#000" strokeWidth="4" />
  </svg>
)

const AxisCross = () => (
  <svg viewBox="0 0 40 60" className="absolute right-2 bottom-4 h-[60px] w-10" aria-hidden="true">
    <g strokeWidth="1.600">
      <path d="M8 35L14 15" stroke="#2ec92e" />
      <path d="M8 35L22 31" stroke="#c83232" />
      <path d="M8 35L26 53" stroke="#2d2dc8" strokeWidth="2.200" />
    </g>
    <path d="M17 10L16 21L11 19z" fill="#2ec92e" />
    <path d="M25 29L20 34L18 29z" fill="#c83232" />
    <path d="M28 55L18 50L22 45z" fill="#2d2dc8" />
    <g fontFamily="Liberation Sans, sans-serif" fontSize="10" fontWeight="bold" fill="#000">
      <text x="17" y="9">Y</text>
      <text x="25" y="28">X</text>
      <text x="28" y="54">Z</text>
    </g>
  </svg>
)

const CloseX = ({ label }: { label: string }) => (
  <button type="button" aria-label={label} className="mr-2 size-3">
    <svg viewBox="0 0 12 12" className="size-3" stroke="#8a8a8a" strokeWidth="2.400" aria-hidden="true">
      <path d="M1 1l10 10M11 1L1 11" />
    </svg>
  </button>
)

const Workspace = () => (
  <main className="flex min-w-0 flex-1 flex-col">
    <div className="relative min-h-0 flex-1 bg-[#f7f7f7]">
      <Model />
      <NavigationCube />
      <AxisCross />
    </div>
    <div className="flex h-[30px] shrink-0 border-t border-[#bdbdbd]">
      <div className="flex h-[29px] w-[91px] items-center rounded-b-[3px] border border-t-0 border-[#c3c3c3] bg-[#dedede] pl-[5px]">
        <Icon name="freecad" className="size-4" />
        <span className="flex-1 pl-[9px] font-['Noto_Sans_CJK_JP',sans-serif]">開始</span>
        <CloseX label="開始を閉じる" />
      </div>
      <div className="-mt-px flex h-[30px] w-40 items-center rounded-b-[3px] border border-t-0 border-l-0 border-[#c3c3c3] bg-[#f8f8f8] pl-1">
        <Icon name="doc" className="size-4" />
        <span className="flex-1 pl-2.5 font-bold whitespace-nowrap">p2_02bsol : 1*</span>
        <CloseX label="p2_02bsolを閉じる" />
      </div>
    </div>
  </main>
)

const StatusBar = () => (
  <footer className="relative flex h-[30px] shrink-0 items-center justify-end pr-[21px]">
    <button type="button" aria-label="通知" className="mr-5 flex items-center gap-1.5">
      <svg viewBox="0 0 14 14" className="size-3.5" aria-hidden="true">
        <path d="M0 0h14v14H0z" fill="#3465a4" />
        <path d="M0 0l7 6 7-6" fill="#4a7cb8" stroke="#2a5690" />
      </svg>
      <Down className="scale-75 text-[#555]" />
    </button>
    <button type="button" className="mr-[22px] flex items-center">
      <svg viewBox="0 0 10 14" className="mr-[5px] h-3.5 w-2.5" fill="none" stroke="#333" aria-hidden="true">
        <rect x="1" y="1" width="8" height="12" rx="3" strokeWidth="1.400" />
        <path d="M5 3v3" strokeWidth="1.600" />
      </svg>
      <span className="w-[44px] text-left">CAD</span>
      <Down className="scale-75 text-[#555]" />
    </button>
    <button type="button" className="flex items-center gap-[9px]">
      81.97 mm x 53.14 mm
      <Down className="scale-75 text-[#555]" />
    </button>
    <svg viewBox="0 0 12 12" className="absolute right-0 bottom-0 size-3" fill="#999" aria-hidden="true">
      {[0, 1, 2, 3].map((r) =>
        Array.from({ length: r + 1 }, (_, c) => <rect key={`${r}-${c}`} x={10 - c * 3} y={r * 3 + 1} width="2" height="2" />),
      )}
    </svg>
  </footer>
)

export default function App() {
  return (
    <div className="flex h-screen flex-col overflow-hidden bg-[#efefef] font-['DejaVu_Sans','Noto_Sans_CJK_JP',sans-serif] text-[12px] leading-4 text-black">
      <MenuBar />
      <Toolbars />
      <div className="flex min-h-0 flex-1 gap-1.5">
        <Dock />
        <Workspace />
      </div>
      <StatusBar />
    </div>
  )
}
